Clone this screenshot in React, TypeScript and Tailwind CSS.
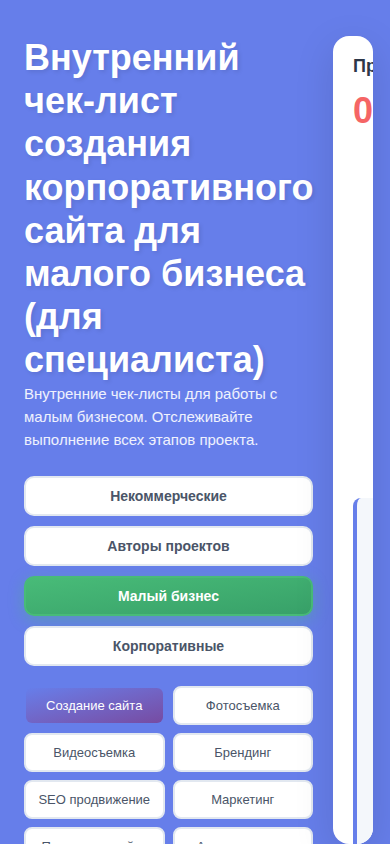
import React from 'react';

const categories = [
  { label: 'Некоммерческие', active: false },
  { label: 'Авторы проектов', active: false },
  { label: 'Малый бизнес', active: true },
  { label: 'Корпоративные', active: false },
];

const services = [
  { label: 'Создание сайта', active: true },
  { label: 'Фотосъемка', active: false },
  { label: 'Видеосъемка', active: false },
  { label: 'Брендинг', active: false },
  { label: 'SEO продвижение', active: false },
  { label: 'Маркетинг', active: false },
  { label: 'Поддержка сайта', active: false },
  { label: 'Автоматизация', active: false },
];

export default function App() {
  return (
    <div className="h-[844px] overflow-hidden bg-[#667eea] font-['Liberation_Sans',Arial,sans-serif]">
      <div className="flex items-start pt-[36px] pl-6">
        {/* Left column */}
        <div className="w-[289px] shrink-0">
          <h1 className="text-[36px] font-bold leading-[1.2] text-white [text-shadow:2px_2px_4px_rgba(0,0,0,0.1)]">
            Внутренний чек-лист создания корпоративного сайта для малого бизнеса (для специалиста)
          </h1>
          <p className="text-[15px] leading-[1.55] text-white/90">
            Внутренние чек-листы для работы с малым бизнесом. Отслеживайте выполнение всех этапов проекта.
          </p>

          {/* Category selector */}
          <div className="mt-[25px] flex flex-col gap-[10px]">
            {categories.map((c) => (
              <button
                key={c.label}
                className={`h-10 w-full rounded-[10px] border-2 text-[14px] font-bold ${
                  c.active
                    ? 'border-[#48bb78] bg-gradient-to-br from-[#48bb78] to-[#38a169] text-white shadow-[0_4px_15px_rgba(72,187,120,0.4)]'
                    : 'border-[#e2e8f0] bg-white text-[#4a5568]'
                }`}
              >
                {c.label}
              </button>
            ))}
          </div>

          {/* Service grid */}
          <div className="mt-5 grid grid-cols-2 gap-x-2 gap-y-2">
            {services.map((s) => (
              <button
                key={s.label}
                className={`h-[39px] rounded-[8px] border-2 text-[13px] ${
                  s.active
                    ? 'border-transparent bg-clip-padding bg-gradient-to-br from-[#667eea] to-[#764ba2] text-white'
                    : 'border-[#e2e8f0] bg-white text-[#4a5568]'
                }`}
              >
                {s.label}
              </button>
            ))}
          </div>
        </div>

        {/* Progress card (squeezed) */}
        <div className="ml-[20px] h-[808px] w-[40px] shrink-0 overflow-hidden rounded-[16px] bg-white shadow-[0_10px_40px_rgba(0,0,0,0.12)]">
          <div className="w-[350px] px-5 pt-5">
            <h3 className="whitespace-nowrap text-[18px] font-bold leading-[20px] text-[#2d3748]">
              Прогресс выполнения
            </h3>
            <div className="mt-[17px] text-[36px] font-bold leading-none text-[#f56565]">0%</div>
            <div className="mt-[369px] h-[400px] rounded-[8px] border-l-4 border-[#667eea] bg-[#f4f7fb]" />
          </div>
        </div>
      </div>
    </div>
  );
}
